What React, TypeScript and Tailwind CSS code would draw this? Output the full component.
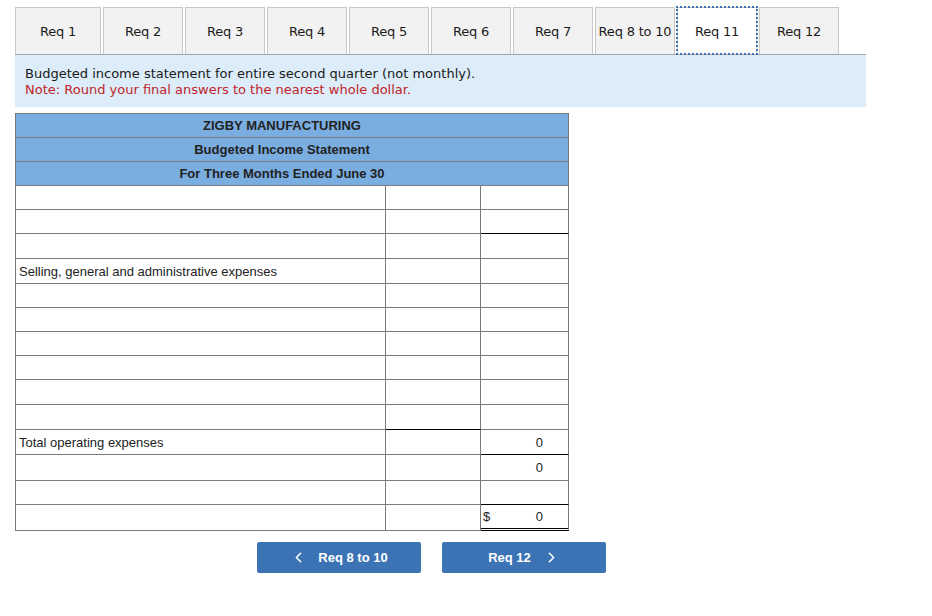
import React from "react";
import { ChevronLeft, ChevronRight } from "lucide-react";

const tabs = ["Req 1", "Req 2", "Req 3", "Req 4", "Req 5", "Req 6", "Req 7", "Req 8 to 10", "Req 11", "Req 12"];

type Row = {
  h: number;
  label?: string;
  c2b?: boolean;
  c3b?: boolean;
  c3double?: boolean;
  v3?: string;
  dollar?: boolean;
};

const rows: Row[] = [
  { h: 24 },
  { h: 24, c3b: true },
  { h: 25 },
  { h: 25, label: "Selling, general and administrative expenses" },
  { h: 24 },
  { h: 24 },
  { h: 24 },
  { h: 24 },
  { h: 25 },
  { h: 25, c2b: true },
  { h: 25, label: "Total operating expenses", v3: "0", c3b: true },
  { h: 26, v3: "0" },
  { h: 24, c3b: true },
  { h: 26, v3: "0", dollar: true, c3double: true },
];

export default function App() {
  return (
    <div className="w-[932px] h-[616px] bg-white relative" style={{ fontFamily: "'DejaVu Sans', Verdana, sans-serif" }}>
      {/* Tabs */}
      <div className="ml-[15px] w-[851px] pt-[7px] flex gap-[2px] border-b border-[#a8a8a8]">
        {tabs.map((t, i) => {
          const active = t === "Req 11";
          return (
            <div
              key={t}
              className={
                "h-[47px] pt-[2px] flex items-center justify-center text-[13px] tracking-[-0.2px] text-[#1a1a1a] border border-b-0 " +
                (i === 0 ? "w-[86px] " : "w-[80px] ") +
                (active
                  ? "bg-white border-[#c8c8c8] outline-2 outline-dotted outline-[#3b73b5] -outline-offset-1"
                  : "bg-[#f2f2f2] border-[#c8c8c8]")
              }
            >
              {t}
            </div>
          );
        })}
      </div>

      {/* Info box */}
      <div className="ml-[15px] w-[851px] bg-[#dcecf8] px-[10px] pt-[11px] pb-[9px] text-[13px] leading-[16px]">
        <div className="text-[#1a1a1a]">Budgeted income statement for entire second quarter (not monthly).</div>
        <div className="text-[#c0242c]">Note: Round your final answers to the nearest whole dollar.</div>
      </div>

      {/* Table */}
      <div
        className="ml-[15px] mt-[6px] w-[554px] border-l border-t border-[#7a7a7a]"
        style={{ fontFamily: "'Liberation Sans', Arial, sans-serif" }}
      >
        {["ZIGBY MANUFACTURING", "Budgeted Income Statement", "For Three Months Ended June 30"].map((h) => (
          <div
            key={h}
            className="h-[24px] bg-[#7aade0] border-r border-b border-[#7a7a7a] flex items-center justify-center pr-[20px] text-[13px] font-bold text-[#222]"
          >
            {h}
          </div>
        ))}
        {rows.map((r, i) => (
          <div key={i} className="flex" style={{ height: r.h }}>
            <div className="w-[370px] border-r border-b border-[#7a7a7a] flex items-center pl-[3px] pt-[1px] text-[13px] text-[#222]">
              {r.label}
            </div>
            <div
              className={
                "w-[95px] border-r border-b " + (r.c2b ? "border-b-black border-r-[#7a7a7a]" : "border-[#7a7a7a]")
              }
            />
            <div
              className={
                "w-[88px] border-r border-[#7a7a7a] flex items-center justify-between text-[13px] text-[#222] pl-[2px] pr-[25px] pt-[1px] " +
                (r.c3double ? "border-b-[3px] border-double border-b-black" : r.c3b ? "border-b border-b-black" : "border-b")
              }
            >
              <span>{r.dollar ? "$" : ""}</span>
              <span>{r.v3}</span>
            </div>
          </div>
        ))}
      </div>

      {/* Buttons */}
      <div className="flex gap-[21px] pl-[257px] mt-[11px]" style={{ fontFamily: "'Liberation Sans', Arial, sans-serif" }}>
        <button className="w-[164px] h-[31px] bg-[#3b73b5] rounded-[2px] text-white text-[13px] font-bold flex items-center justify-center gap-[11px]">
          <ChevronLeft size={17} strokeWidth={2.2} />
          <span>Req 8 to 10</span>
        </button>
        <button className="w-[164px] h-[31px] bg-[#3b73b5] rounded-[2px] text-white text-[13px] font-bold flex items-center justify-center gap-[12px]">
          <span>Req 12</span>
          <ChevronRight size={17} strokeWidth={2.2} />
        </button>
      </div>
    </div>
  );
}
